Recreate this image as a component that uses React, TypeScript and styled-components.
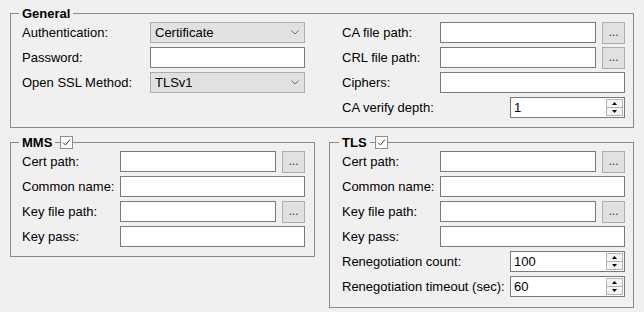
import React from 'react'
import styled, { createGlobalStyle } from 'styled-components'

const GlobalStyle = createGlobalStyle`
  html, body {
    margin: 0;
    background: #f0f0f0;
  }
  body {
    font-family: "Liberation Sans", Arial, sans-serif;
    font-size: 13px;
    color: #000;
  }
`

const Page = styled.div`
  width: 624px;
  padding: 13px 0 0 10px;
`

const GroupBox = styled.div<{ $pad: number; $bottom: number }>`
  position: relative;
  border: 1px solid #8a8a8a;
  padding: 8px 8px ${(p) => p.$bottom}px ${(p) => p.$pad}px;
`

const GroupTitle = styled.div<{ $pad: number }>`
  position: absolute;
  top: -8px;
  left: ${(p) => p.$pad - 3}px;
  display: flex;
  align-items: center;
  height: 15px;
`

const TitleText = styled.span`
  font-weight: bold;
  line-height: 15px;
  padding: 0 3px;
  background: #f0f0f0;
`

const CheckWrap = styled.span`
  display: flex;
  margin-left: 5px;
  background: #f0f0f0;
`

const Columns = styled.div`
  display: flex;
  gap: 37px;
  align-items: flex-start;
`

const Form = styled.div<{ $label: number }>`
  display: grid;
  grid-template-columns: ${(p) => p.$label}px 1fr;
  grid-auto-rows: 21px;
  row-gap: 4px;
  align-items: center;
  width: 283px;
`

const Label = styled.div`
  white-space: nowrap;
  line-height: 15px;
`

const TextBox = styled.input`
  box-sizing: border-box;
  height: 21px;
  width: 100%;
  margin: 0;
  padding: 0 3px;
  border: 1px solid #7a7a7a;
  background: #fff;
  font: inherit;
  color: #000;
  outline: none;
`

const Combo = styled.div`
  box-sizing: border-box;
  display: flex;
  align-items: center;
  justify-content: space-between;
  height: 21px;
  padding: 0 5px 0 4px;
  border: 1px solid #adadad;
  background: #e1e1e1;
`

const FileRow = styled.div`
  display: flex;
  gap: 6px;
  align-items: center;
`

const BrowseButton = styled.button`
  box-sizing: border-box;
  flex: 0 0 23px;
  height: 22px;
  margin: 0;
  padding: 0;
  border: 1px solid #adadad;
  background: #e1e1e1;
  font: inherit;
  font-size: 12px;
  color: #333;
  line-height: 15px;
`

const Spin = styled.div`
  box-sizing: border-box;
  justify-self: end;
  display: flex;
  width: 115px;
  height: 21px;
  border: 1px solid #7a7a7a;
  background: #fff;
`

const SpinValue = styled.span`
  flex: 1;
  padding-left: 3px;
  line-height: 19px;
`

const SpinButtons = styled.div`
  display: flex;
  flex-direction: column;
  width: 15px;
  margin: 1px;
  border: 1px solid #b4b4b4;
`

const SpinHalf = styled.div<{ $down?: boolean }>`
  flex: 1;
  display: flex;
  align-items: center;
  justify-content: center;
  background: #f4f4f4;
  border-top: ${(p) => (p.$down ? '1px solid #b4b4b4' : 'none')};
`

const BottomRow = styled.div`
  display: grid;
  grid-template-columns: 305px 305px;
  column-gap: 14px;
  align-items: start;
  margin-top: 14px;
`

const Chevron = () => (
  <svg width="8" height="5" viewBox="0 0 8 5">
    <polyline points="0.5,0.5 4,4 7.5,0.5" fill="none" stroke="#6d6d6d" strokeWidth="1" />
  </svg>
)

const Arrow = ({ down }: { down?: boolean }) => (
  <svg width="5" height="3" viewBox="0 0 5 3">
    <polygon points={down ? '0,0 5,0 2.5,3' : '0,3 5,3 2.5,0'} fill="#000" />
  </svg>
)

const CheckBox = () => (
  <svg width="13" height="13" viewBox="0 0 13 13">
    <rect x="0.5" y="0.5" width="12" height="12" fill="#fff" stroke="#8f8f8f" />
    <polyline points="3,6.5 5.5,9 10,3.5" fill="none" stroke="#444" strokeWidth="1" />
  </svg>
)

const File = () => (
  <FileRow>
    <TextBox defaultValue="" />
    <BrowseButton>...</BrowseButton>
  </FileRow>
)

const SpinBox = ({ value }: { value: string }) => (
  <Spin>
    <SpinValue>{value}</SpinValue>
    <SpinButtons>
      <SpinHalf>
        <Arrow />
      </SpinHalf>
      <SpinHalf $down>
        <Arrow down />
      </SpinHalf>
    </SpinButtons>
  </Spin>
)

const CertFields = () => (
  <>
    <Label>Cert path:</Label>
    <File />
    <Label>Common name:</Label>
    <TextBox defaultValue="" />
    <Label>Key file path:</Label>
    <File />
    <Label>Key pass:</Label>
    <TextBox defaultValue="" />
  </>
)

const App: React.FC = () => {
  return (
    <Page>
      <GlobalStyle />
      <GroupBox $pad={11} $bottom={9}>
        <GroupTitle $pad={11}>
          <TitleText>General</TitleText>
        </GroupTitle>
        <Columns>
          <Form $label={128}>
            <Label>Authentication:</Label>
            <Combo>
              <span>Certificate</span>
              <Chevron />
            </Combo>
            <Label>Password:</Label>
            <TextBox type="text" defaultValue="" />
            <Label>Open SSL Method:</Label>
            <Combo>
              <span>TLSv1</span>
              <Chevron />
            </Combo>
          </Form>
          <Form $label={98}>
            <Label>CA file path:</Label>
            <File />
            <Label>CRL file path:</Label>
            <File />
            <Label>Ciphers:</Label>
            <TextBox defaultValue="" />
            <Label>CA verify depth:</Label>
            <SpinBox value="1" />
          </Form>
        </Columns>
      </GroupBox>

      <BottomRow>
        <GroupBox $pad={11} $bottom={9}>
          <GroupTitle $pad={11}>
            <TitleText>MMS</TitleText>
            <CheckWrap>
              <CheckBox />
            </CheckWrap>
          </GroupTitle>
          <Form $label={98}>
            <CertFields />
          </Form>
        </GroupBox>

        <GroupBox $pad={12} $bottom={10}>
          <GroupTitle $pad={12}>
            <TitleText>TLS</TitleText>
            <CheckWrap>
              <CheckBox />
            </CheckWrap>
          </GroupTitle>
          <Form $label={98}>
            <CertFields />
            <Label>Renegotiation count:</Label>
            <SpinBox value="100" />
            <Label>Renegotiation timeout (sec):</Label>
            <SpinBox value="60" />
          </Form>
        </GroupBox>
      </BottomRow>
    </Page>
  )
}

export default App
